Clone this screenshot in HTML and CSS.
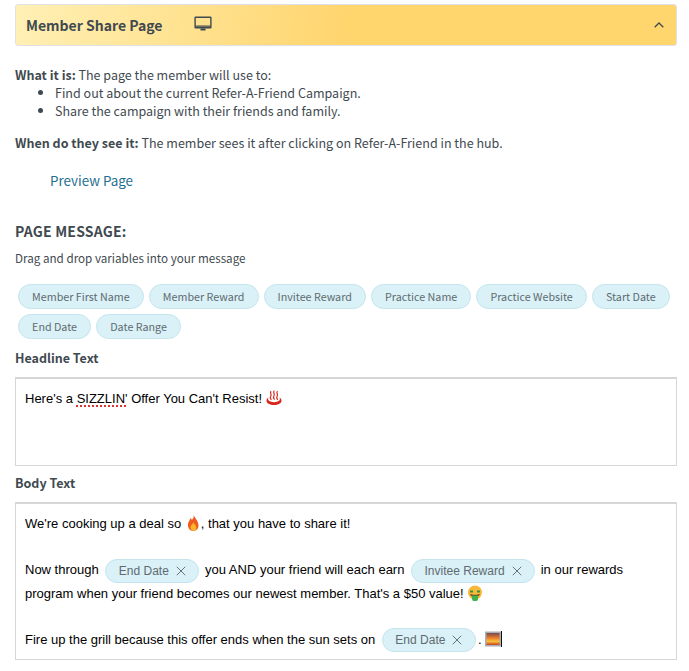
FILE: index.html
```html
<!DOCTYPE html>
<html lang="en">
<head>
<meta charset="utf-8">
<title>Member Share Page</title>
<link rel="stylesheet" href="styles.css">
</head>
<body>
<main class="page">
  <header class="banner">
    <div class="banner-left">
      <h1 class="banner-title">Member Share Page</h1>
      <svg class="monitor" viewBox="0 0 18 16" width="18" height="16"><path d="M1.6 0.5h14.8a1.2 1.2 0 0 1 1.2 1.2v9.6a1.2 1.2 0 0 1-1.2 1.2H1.6a1.2 1.2 0 0 1-1.2-1.2V1.700a1.2 1.2 0 0 1 1.2-1.2zM1.800 2v8.400h14.400V2z" fill="#3f4a50" fill-rule="evenodd"/><path d="M1.800 9.500h14.400v1H1.800z" fill="#3f4a50"/><path d="M6.500 12.500h5v2h-5z" fill="#3f4a50"/></svg>
    </div>
    <svg class="chevron" viewBox="0 0 10 6" width="10" height="6"><path d="M0.700 5.200L5 1l4.300 4.200" fill="none" stroke="#3f4a50" stroke-width="1.300"/></svg>
  </header>

  <section class="intro">
    <p class="intro-line"><strong>What it is:</strong> The page the member will use to:</p>
    <ul class="intro-list">
      <li>Find out about the current Refer-A-Friend Campaign.</li>
      <li>Share the campaign with their friends and family.</li>
    </ul>
    <p class="intro-line when"><strong>When do they see it:</strong> The member sees it after clicking on Refer-A-Friend in the hub.</p>
    <a class="preview" href="#">Preview Page</a>
  </section>

  <h2 class="section-title">PAGE MESSAGE:</h2>
  <p class="hint">Drag and drop variables into your message</p>

  <div class="chips">
    <span class="chip">Member First Name</span>
    <span class="chip">Member Reward</span>
    <span class="chip">Invitee Reward</span>
    <span class="chip">Practice Name</span>
    <span class="chip">Practice Website</span>
    <span class="chip">Start Date</span>
    <span class="chip">End Date</span>
    <span class="chip">Date Range</span>
  </div>

  <h3 class="field-label headline-label">Headline Text</h3>
  <div class="editor headline">
    <p>Here's a <span class="misspelt">SIZZLIN'</span> Offer You Can't Resist! <svg class="emoji" viewBox="0 0 16 16" width="16" height="16"><g fill="none" stroke="#d9261c" stroke-width="1.200" stroke-linecap="round"><path d="M4.800 1.500c-1.200 1.500 1.200 2.500 0 4.500s0 3 .3 3.500"/><path d="M8 1c-1.200 1.600 1.200 2.700 0 4.700s0 3 .3 3.500"/><path d="M11.200 1.500c-1.200 1.500 1.200 2.500 0 4.500s0 3 .3 3.500"/></g><path d="M2.600 7.500C1 8.500.5 9.500.5 10.700c0 2.500 3.300 4.300 7.500 4.300s7.500-1.800 7.500-4.300c0-1.200-.5-2.200-2.100-3.200.6 1 .7 1.800.3 2.500-.8 1.400-3.200 2.200-5.700 2.200s-4.900-.8-5.700-2.200c-.4-.7-.3-1.500.3-2.500z" fill="#d9261c"/></svg></p>
  </div>

  <h3 class="field-label body-label">Body Text</h3>
  <div class="editor body-editor">
    <p class="row">We're cooking up a deal so <svg class="emoji" viewBox="0 0 16 16" width="16" height="16"><path d="M8.500 0c.7 2.300-.4 3.600-1.700 5C6.500 4 6 3.500 5.200 3 5.400 5 3 6.600 3 10.200 3 13.500 5.300 16 8.200 16c3 0 5.300-2.300 5.300-5.500C13.500 6 10.300 3.800 8.500 0z" fill="#ef5a1e"/><path d="M8.300 7c.2 1.600-2.800 3-2.800 5.600 0 2 1.200 3.400 2.900 3.400s3-1.400 3-3.300c0-2.500-2.400-3.600-3.100-5.700z" fill="#fcb42c"/></svg>, that you have to share it!</p>
    <p class="row">&nbsp;</p>
    <p class="row">Now through <span class="token">End Date<svg class="x" viewBox="0 0 10 10" width="10" height="10"><path d="M.8.800l8.400 8.400M9.200.800L.8 9.200" stroke="#66747a" stroke-width="1" fill="none"/></svg></span> you AND your friend will each earn <span class="token">Invitee Reward<svg class="x" viewBox="0 0 10 10" width="10" height="10"><path d="M.8.800l8.400 8.400M9.200.800L.8 9.200" stroke="#66747a" stroke-width="1" fill="none"/></svg></span> in our rewards</p>
    <p class="row after-token">program when your friend becomes our newest member. That's a $50 value! <svg class="emoji" viewBox="0 0 16 16" width="16" height="16"><circle cx="8" cy="7.500" r="7" fill="#f6b93b"/><path d="M3 5.500h3v2H3zM10 5.500h3v2h-3z" fill="#3f8f3a"/><path d="M3 9c2 1 8 1 10 0-.5 1.500-1.500 2-2 2.200H5C4.400 11 3.500 10.500 3 9z" fill="#6b3d1f"/><path d="M5 10.500h6V14a2 2 0 0 1-2 2H7a2 2 0 0 1-2-2z" fill="#3cb44a"/></svg></p>
    <p class="row">&nbsp;</p>
    <p class="row">Fire up the grill because this offer ends when the sun sets on <span class="token">End Date<svg class="x" viewBox="0 0 10 10" width="10" height="10"><path d="M.8.800l8.400 8.400M9.200.800L.8 9.200" stroke="#66747a" stroke-width="1" fill="none"/></svg></span>. <svg class="emoji sunset" viewBox="0 0 16 16" width="16" height="16"><defs><linearGradient id="sky" x1="0" y1="0" x2="0" y2="1"><stop offset="0" stop-color="#7a4a4a"/><stop offset=".45" stop-color="#f0822c"/><stop offset=".7" stop-color="#f9c23c"/><stop offset="1" stop-color="#c9401e"/></linearGradient></defs><rect x="0" y="0.500" width="16" height="15" fill="#a9aeb8"/><rect x="1.500" y="2" width="13" height="12" fill="url(#sky)"/></svg><span class="caret"></span></p>
  </div>
</main>
</body>
</html>
```

FILE: styles.css
```css
* { box-sizing: border-box; }
html, body { margin: 0; padding: 0; background: #fff; }
body {
  width: 689px;
  height: 671px;
  overflow: hidden;
  font-family: "Noto Sans CJK SC", "Noto Sans", sans-serif;
  color: #3f4a50;
  font-size: 12.520px;
}
.page { padding: 4px 12px 0 15px; }
p, h1, h2, h3, ul { margin: 0; }

.banner {
  height: 42px;
  display: flex;
  align-items: center;
  justify-content: space-between;
  padding: 0 12px 0 10px;
  border: 1px solid #dfe1e6;
  border-radius: 3px;
  background: linear-gradient(100deg, #fff0b5 0%, #ffd56e 50%, #ffd56e 100%);
}
.banner-left { display: flex; align-items: center; }
.banner-title { font-size: 14px; font-weight: 700; line-height: 20px; width: 168px; }
.monitor { display: block; margin-top: -3px; }
.chevron { display: block; }

.intro { margin-top: 20px; line-height: 18px; }
.intro-list { padding-left: 40px; }
.when { margin-top: 14px; }
.preview {
  display: block;
  margin: 18px 0 0 35px;
  font-size: 13.400px;
  line-height: 20px;
  color: #1f6f91;
  text-decoration: none;
}
strong { font-weight: 700; }

.section-title { margin-top: 31px; font-size: 14px; line-height: 20px; font-weight: 700; letter-spacing: .2px; }
.hint { margin-top: 8px; font-size: 11.650px; line-height: 18px; }

.chips { display: flex; flex-wrap: wrap; gap: 5px; margin-top: 17px; padding-left: 3px; }
.chip {
  height: 25px;
  padding: 0 13.100px;
  display: flex;
  align-items: center;
  font-size: 10.720px;
  color: #5f6b70;
  background: #d9f1f7;
  border: 1px solid #c5e5ee;
  border-radius: 13px;
}

.field-label { font-size: 12.500px; font-weight: 700; line-height: 18px; }
.headline-label { margin-top: 10px; }
.body-label { margin-top: 8px; }

.editor {
  margin-top: 10px;
  border: 1px solid #d6d6d6;
  border-top-width: 2px;
  padding: 11px 9px 0;
  font-family: "Liberation Sans", Arial, sans-serif;
  font-size: 13px;
  line-height: 18px;
  color: #000;
}
.headline { height: 89px; }
.body-editor { height: 158px; padding-top: 8px; }
.row { line-height: 23px; white-space: nowrap; }
.after-token { margin-top: -1px; }
.misspelt { text-decoration: underline dotted #d33; text-decoration-thickness: 1.500px; text-underline-offset: 2px; }
.emoji { vertical-align: -3px; }
.token {
  display: inline-block;
  height: 24px;
  line-height: 22px;
  padding: 0 12.500px;
  margin: 0 2px 0 3px;
  font-size: 12px;
  color: #5f6b70;
  background: #d9f1f7;
  border: 1px solid #c5e5ee;
  border-radius: 12px;
  vertical-align: middle;
}
.x { margin-left: 7px; vertical-align: -1px; }
.caret { display: inline-block; width: 1px; height: 16px; background: #111; vertical-align: -3px; }
```
